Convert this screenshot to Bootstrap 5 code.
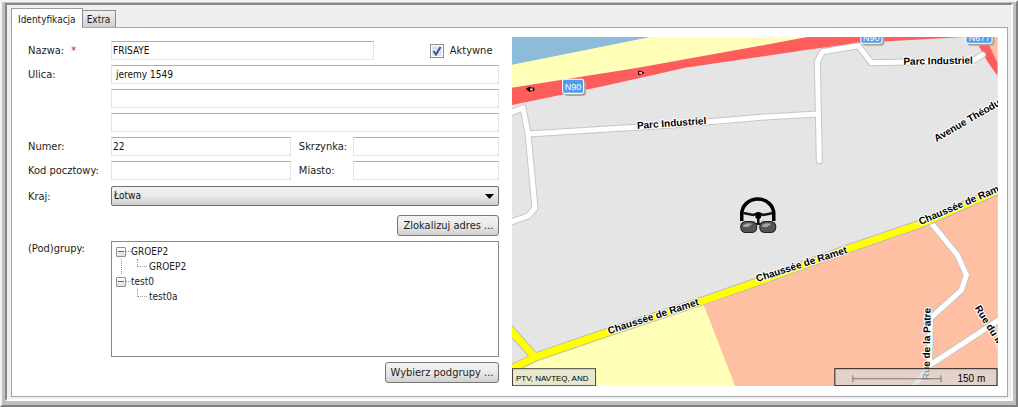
<!DOCTYPE html>
<html lang="pl">
<head>
<meta charset="utf-8">
<meta name="viewport" content="width=device-width, initial-scale=1">
<title>Identyfikacja</title>
<link href="https://cdn.jsdelivr.net/npm/bootstrap@5.3.0/dist/css/bootstrap.min.css" rel="stylesheet">
<style>
body{font-family:"DejaVu Sans Condensed","DejaVu Sans",sans-serif;font-size:11px;line-height:15px;color:#1c1c1c;background:#c0c0c0}
.frame{border:2px solid #f4f4f4;border-right-color:#808080;border-bottom-color:#808080;padding:1px 3px 3px;min-height:100vh}
.frame-inner{border:2px solid #858585;border-right-color:#fff;border-bottom-color:#fff;background:#efefef;padding:3px 3px 2px 4px}
.nav-tabs{border:0}
.nav-tabs .nav-link{border:1px solid #8c8e96;border-bottom:0;border-radius:0;color:#1c1c1c;font-size:10px;padding:2px 5px 0 4px;height:17px;line-height:14px;background:linear-gradient(#f2f2f2,#cfcfcf);margin:0 0 0 -1px}
.nav-tabs .nav-link.active{height:20px;margin:0 0 -1px;padding:3px 6px 0;background:#fff;border-color:#9a9ca6;color:#1c1c1c}
.panel{background:#fff;border:1px solid #a3a5ae;padding:9px 9px 10px 16px}
.split{display:grid;grid-template-columns:471fr 485fr;column-gap:13px}
.line{display:flex;align-items:center;min-height:19px;margin-bottom:5px}
.lbl{flex:0 0 83px}
.req{color:#f00}
.lbl2{flex:0 0 62px;padding-left:8px}
.field{height:19px;min-height:0;min-width:0;border:1px solid #e0e3ea;border-top-color:#abadb3;border-radius:1px;padding:0 1px;font-size:10px;line-height:15px;color:#111}
.w-name{flex:0 1 263px}
.w-a{flex:180 1 0}
.w-b{flex:146 1 0}
.active-flag{gap:6px;padding-right:7px}
.combo{height:20px;border:1px solid #707070;border-radius:2px;color:#111;font-size:10px;line-height:16px;padding:0 20px 0 2px;background:url("data:image/svg+xml,%3Csvg xmlns='http://www.w3.org/2000/svg' viewBox='0 0 9 5'%3E%3Cpath d='M0 0h9L4.500 5z'/%3E%3C/svg%3E") right 4px center/9px 5px no-repeat,linear-gradient(#f3f3f3,#e8e8e8 50%,#cdcdcd)}
.country{padding-top:1px;margin-bottom:9px}
.push{height:21px;border:1px solid #777;border-radius:3px;padding:0 5px;font-size:11px;line-height:17px;color:#1c1c1c;background:linear-gradient(#f3f3f3,#e9e9e9 50%,#d0d0d0)}
.tick{width:14px;height:14px;margin:0;border:1px solid #8e8f8f;background:#e4e7ec;box-shadow:inset 0 0 0 1px #fff}
.form-check-input.tick[type=checkbox]{border-radius:0}
.tick:checked{background-color:#dfe4ec;border-color:#8e8f8f}
.form-check-input.tick:checked[type=checkbox]{background-size:12px;background-image:url("data:image/svg+xml,%3Csvg xmlns='http://www.w3.org/2000/svg' viewBox='0 0 12 12'%3E%3Cpath d='M2.500 6 5 9.500 9.500 2' fill='none' stroke='%2339559c' stroke-width='2'/%3E%3C/svg%3E")}
.tree-box{height:116px;border:1px solid #828790;padding:2px 4px;font-size:10px;line-height:15px}
.tree-box ul{list-style:none;margin:0;padding:0}
.node{display:flex;align-items:center;height:15px}
.twisty{width:10px;height:10px;padding:0;border:1px solid #909090;border-radius:1px;background:linear-gradient(#fff,#ddd);display:flex;align-items:center;justify-content:center}
.twisty::before{content:"";width:6px;height:1px;background:#4a63a8}
.dash{width:5px;border-top:1px dotted #999}
.tree-box .kids{margin-left:5px;padding-left:16px}
.tree-box .first .kids{border-left:1px dotted #999;padding-left:15px}
.elbow{width:10px;height:8px;border:1px dotted #999;border-width:0 0 1px 1px;align-self:flex-start;margin-right:2px}
.map{display:block;width:100%;height:349px;background:#e5e5e5;font-family:"Liberation Sans",Arial,sans-serif;font-size:10px}
.road{fill:none;stroke-linejoin:round;stroke-linecap:round}
.street{paint-order:stroke;stroke:#fff;stroke-width:2px;stroke-linejoin:round;fill:#000;font-weight:bold}
</style>
</head>
<body>
<main class="frame">
<div class="frame-inner">
<div class="nav nav-tabs align-items-end" role="tablist">
<button class="nav-link active" type="button" role="tab" data-bs-toggle="tab" data-bs-target="#ident" aria-selected="true">Identyfikacja</button>
<button class="nav-link" type="button" role="tab" data-bs-toggle="tab" data-bs-target="#extra" aria-selected="false">Extra</button>
</div>
<div class="panel tab-content">
<div class="tab-pane active" id="ident" role="tabpanel">
<div class="split">
<form class="pt-1" onsubmit="return false">
<div class="line"><label class="lbl" for="nazwa">Nazwa: <span class="req ms-1">*</span></label><input class="form-control field w-name" id="nazwa" value="FRISAYE">
<div class="d-flex align-items-center ms-auto active-flag"><input class="form-check-input tick" type="checkbox" id="akt" checked><label for="akt">Aktywne</label></div></div>
<div class="line"><label class="lbl" for="ulica">Ulica:</label><input class="form-control field ps-1" id="ulica" value="jeremy 1549"></div>
<div class="line"><span class="lbl"></span><input class="form-control field" aria-label="Ulica 2"></div>
<div class="line"><span class="lbl"></span><input class="form-control field" aria-label="Ulica 3"></div>
<div class="line"><label class="lbl" for="numer">Numer:</label><input class="form-control field w-a" id="numer" value="22"><label class="lbl2" for="skrz">Skrzynka:</label><input class="form-control field w-b" id="skrz"></div>
<div class="line"><label class="lbl" for="kod">Kod pocztowy:</label><input class="form-control field w-a" id="kod"><label class="lbl2" for="miasto">Miasto:</label><input class="form-control field w-b" id="miasto"></div>
<div class="line country"><label class="lbl" for="kraj">Kraj:</label><select class="form-select combo" id="kraj"><option>Łotwa</option></select></div>
<div class="line justify-content-end"><button class="btn push" type="button">Zlokalizuj adres ...</button></div>
<div class="line align-items-start"><span class="lbl">(Pod)grupy:</span>
<div class="tree-box flex-fill">
<ul>
<li class="first"><div class="node"><button class="twisty" type="button" aria-label="Zwiń GROEP2"></button><span class="dash"></span>GROEP2</div><ul class="kids"><li class="node"><span class="elbow"></span>GROEP2</li></ul></li>
<li><div class="node"><button class="twisty" type="button" aria-label="Zwiń test0"></button><span class="dash"></span>test0</div><ul class="kids"><li class="node"><span class="elbow"></span>test0a</li></ul></li>
</ul>
</div></div>
<div class="d-flex justify-content-end"><button class="btn push" type="button">Wybierz podgrupy ...</button></div>
</form>
<svg class="map" viewBox="0 0 485 349" preserveAspectRatio="xMidYMid slice" role="img" aria-label="Mapa">
<!-- land areas -->
<path fill="#ffffb8" d="M0 0H300L248 9 126 31 0 51Z"/>
<path fill="#8dbcdb" d="M0 0H139L70 14 0 28Z"/>
<path fill="#ffffb8" d="M0 331 23 320 193 263 223 349H0Z"/>
<path fill="#ffbfa2" d="M190 264 335 212 408 187 485 153V349H223ZM474 0H485V30Z"/>
<!-- main road -->
<path fill="#ff5c5c" d="M0 51 126 31 248 9 291 1 297 0H455L421 2 348 6 295 13 248 20 173 31 93 49 0 68Z"/>
<path fill="#ff5c5c" d="M464 5H475L485 26V39L475 25Z"/>
<!-- side streets: casing, then surface -->
<g class="road" stroke="#c6c6c6" stroke-width="7"><path d="M-4 77 11 71 16 97 23 171 16 179-4 186M16 97 160 88 253 80 305 77M307 124 305 25 310 15 346 9 359 26 460 24 470 18"/><path d="M418 185 445 218 454 238 449 253 418 281 417 328 400 351M416 329 489 281"/></g>
<g class="road" stroke="#fff" stroke-width="5"><path d="M-4 77 11 71 16 97 23 171 16 179-4 186M16 97 160 88 253 80 305 77M307 124 305 25 310 15 346 9 359 26 460 24 470 18"/><path d="M418 185 445 218 454 238 449 253 418 281 417 328 400 351M416 329 489 281"/></g>
<g class="road"><path stroke="#bdbdb0" stroke-width="9" d="M-5 334 23 320 93 296 193 263 253 242 335 212 408 187 489 152M-5 289 23 320"/><path stroke="#ff0" stroke-width="7" d="M-5 334 23 320 93 296 193 263 253 242 335 212 408 187 489 152M-5 289 23 320"/></g>
<!-- direction arrows -->
<path d="M14 52 18 50V51H22V54H18V55Z" stroke="#000" fill="#000" stroke-width=".5"/><path d="M18 51.500h3v2h-3z" fill="#ff9a9a"/>
<path d="M126 34V38H128L132 36.500V35.500L128 34Z" fill="#000"/><path d="M127 35h3v2h-3z" fill="#ffc0c0"/>
<!-- road numbers -->
<g fill="#aaa898"><rect x="52" y="44" width="22" height="15" rx="3"/><rect x="350" y="-6" width="22" height="15" rx="3"/><rect x="455" y="-6" width="27" height="15" rx="3"/></g>
<g fill="#4d9ced" stroke="#fff"><rect x="50.500" y="42.500" width="21" height="14" rx="2"/><rect x="348.500" y="-7.500" width="21" height="14" rx="2"/><rect x="453.500" y="-7.500" width="26" height="14" rx="2"/></g>
<g fill="#fff" text-anchor="middle" font-size="9"><text x="61" y="53">N90</text><text x="359" y="4">N90</text><text x="467" y="4">N677</text></g>
<g class="street">
<text transform="translate(125 92) rotate(-4)">Parc Industriel</text>
<text transform="translate(391 28) rotate(-1)">Parc Industriel</text>
<text transform="translate(424 105) rotate(-30)">Avenue Théodule</text>
<text transform="translate(97 297) rotate(-18)">Chaussée de Ramet</text>
<text transform="translate(245 245) rotate(-18)">Chaussée de Ramet</text>
<text transform="translate(408 188) rotate(-23)">Chaussée de Ramet</text>
<text transform="translate(417 343) rotate(-89)">Rue de la Patre</text>
<text transform="translate(462 271) rotate(58)">Rue du Moulin</text>
</g>
<!-- driver marker -->
<path d="M229.500 184V177a16 15 0 0 1 32 0V184" fill="none" stroke="#000" stroke-width="3.500"/>
<path d="M231 176 241 178 246 176 251 178 261 176M246 176V188" fill="none" stroke="#111" stroke-width="2.500"/><circle cx="246" cy="179" r="3"/>
<path d="M242 187H250" stroke="#111" stroke-width="2"/>
<rect x="228.500" y="184.500" width="16" height="11" rx="5" fill="#555" stroke="#222"/><rect x="247.500" y="184.500" width="16" height="11" rx="5" fill="#555" stroke="#222"/>
<path d="M231 188Q235 185 240 187L236 190H231ZM250 188Q254 185 259 187L255 190H250Z" fill="#a5a5a5"/>
<!-- credits and scale -->
<rect x=".5" y="331.500" width="83" height="17" fill="#e5e5cd" fill-opacity=".92" stroke="#444"/><text x="4" y="344" font-size="8">PTV, NAVTEQ, AND</text>
<rect x="322.500" y="331.500" width="162" height="17" fill="#d8d8d8" fill-opacity=".7" stroke="#222"/>
<path d="M340.500 338v7M428.500 338v7M340 341.500H428" fill="none" stroke="#777"/><text x="445" y="345">150 m</text>
</svg>
</div>
</div>
<div class="tab-pane" id="extra" role="tabpanel"></div>
</div>
</div>
</main>
<script src="https://cdn.jsdelivr.net/npm/bootstrap@5.3.0/dist/js/bootstrap.bundle.min.js"></script>
</body>
</html>
